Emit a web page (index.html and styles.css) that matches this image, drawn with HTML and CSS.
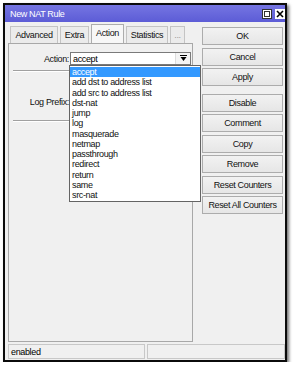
FILE: index.html
```html
<!DOCTYPE html>
<html>
<head>
    <title>New NAT Rule</title>
    <meta http-equiv="Content-Type" content="text/html; charset=utf-8">
    <link rel="stylesheet" href="styles.css">
</head>
<body>
    <div class="window">
        <div class="titlebar">
            <span class="title">New NAT Rule</span>
            <div class="title-buttons">
                <span class="tbtn tbtn-max"><span class="max-inner"></span></span>
                <span class="tbtn tbtn-close">
                    <svg width="8" height="8" viewBox="0 0 8 8"><path d="M1 1 L7 7 M7 1 L1 7" stroke="#000" stroke-width="1.6"/></svg>
                </span>
            </div>
        </div>

        <div class="body">
            <div class="left-col">
                <div class="tabs">
                    <div class="tab tab-advanced">Advanced</div>
                    <div class="tab tab-extra">Extra</div>
                    <div class="tab tab-action active">Action</div>
                    <div class="tab tab-stats">Statistics</div>
                    <div class="tab tab-more">...</div>
                </div>
                <div class="panel">
                    <div class="field-row action-row">
                        <div class="field-label">Action:</div>
                        <div class="select">
                            <span class="select-value">accept</span>
                            <span class="select-arrow">
                                <svg width="7" height="7" viewBox="0 0 7 7"><path d="M0 0.5 H7" stroke="#000" stroke-width="1"/><path d="M0.5 2 H6.5 L3.5 6 Z" fill="#000"/></svg>
                            </span>
                            <!-- open dropdown list -->
                            <ul class="dropdown">
                                <li class="selected">accept</li>
                                <li>add dst to address list</li>
                                <li>add src to address list</li>
                                <li>dst-nat</li>
                                <li>jump</li>
                                <li>log</li>
                                <li>masquerade</li>
                                <li>netmap</li>
                                <li>passthrough</li>
                                <li>redirect</li>
                                <li>return</li>
                                <li>same</li>
                                <li>src-nat</li>
                            </ul>
                        </div>
                    </div>
                    <div class="separator sep-first"></div>
                    <div class="field-row log-row">
                        <div class="field-label">Log Prefix:</div>
                        <div class="text-input"></div>
                    </div>
                    <div class="separator sep-second"></div>
                </div>
            </div>

            <div class="buttons">
                <div class="btn">OK</div>
                <div class="btn">Cancel</div>
                <div class="btn">Apply</div>
                <div class="btn btn-group-start">Disable</div>
                <div class="btn">Comment</div>
                <div class="btn">Copy</div>
                <div class="btn">Remove</div>
                <div class="btn">Reset Counters</div>
                <div class="btn">Reset All Counters</div>
            </div>
        </div>

        <div class="statusbar">
            <div class="status-field status-left">enabled</div>
            <div class="status-field status-right"></div>
        </div>
    </div>
</body>
</html>
```

FILE: styles.css
```css
body, html {
    margin: 0;
    background: #fff;
    font-family: "Liberation Sans", Arial, sans-serif;
    font-size: 9px;
    letter-spacing: -0.35px;
    color: #000;
}

.window {
    box-sizing: border-box;
    margin: 3px 0 0 3px;
    width: 284px;
    height: 359px;
    border: 2px solid #0b0b0b;
    background: #f0f0f0;
    box-shadow: 2px 2px 3px rgba(0, 0, 0, 0.55);
    display: flex;
    flex-direction: column;
}

.titlebar {
    height: 17px;
    background: linear-gradient(180deg, #7575e2, #5c5cd6);
    display: flex;
    align-items: center;
    justify-content: space-between;
    padding: 0 0 0 5px;
}

.title {
    color: #fff;
    font-size: 9px;
}

.title-buttons {
    display: flex;
    gap: 3px;
    margin-right: 0;
}

.tbtn {
    box-sizing: border-box;
    width: 10px;
    height: 10px;
    background: #fff;
    display: flex;
    align-items: center;
    justify-content: center;
}

.tbtn-max {
    border: 1px solid #333;
}

.max-inner {
    box-sizing: border-box;
    width: 6px;
    height: 6px;
    border: 1px solid #333;
}

.body {
    flex: 1;
    display: flex;
    padding: 0 2px 0 3px;
    gap: 9px;
}

.left-col {
    width: 185px;
    display: flex;
    flex-direction: column;
}

.tabs {
    display: flex;
    align-items: flex-end;
    gap: 2px;
    padding-left: 2px;
    height: 21px;
}

.tab {
    box-sizing: border-box;
    height: 17px;
    border: 1px solid #c4c4c4;
    border-bottom: none;
    background: #ebebeb;
    color: #111;
    display: flex;
    align-items: center;
    justify-content: center;
}

.tab-advanced { width: 48px; }
.tab-extra { width: 29px; }
.tab-action { width: 33px; }
.tab-stats { width: 42px; }
.tab-more { width: 15px; color: #999; }

.tab.active {
    height: 19px;
    background: #f7f7f7;
    border-color: #adadad;
    padding-bottom: 3px;
}

.panel {
    flex: 1;
    border: 1px solid #a8a8a8;
    background: #f0f0f0;
    padding-top: 8px;
}

.field-row {
    display: flex;
    align-items: center;
    height: 13px;
}

.field-label {
    width: 60px;
    text-align: right;
    padding-right: 1px;
    color: #111;
}

.select {
    position: relative;
    box-sizing: border-box;
    width: 121px;
    height: 13px;
    border: 1px solid #7a7a7a;
    background: #fff;
    display: flex;
    align-items: center;
    justify-content: space-between;
    padding-left: 2px;
}

.select-arrow {
    box-sizing: border-box;
    width: 15px;
    height: 11px;
    border-left: 1px solid #dcdcdc;
    background: #f4f4f4;
    display: flex;
    align-items: center;
    justify-content: center;
}

.dropdown {
    position: absolute;
    top: 12px;
    left: -2px;
    box-sizing: border-box;
    width: 132px;
    height: 137px;
    margin: 0;
    padding: 1px 0 0;
    list-style: none;
    background: #fff;
    border: 1px solid #646464;
    z-index: 2;
}

.dropdown li {
    height: 10.25px;
    line-height: 10.25px;
    padding-left: 2px;
    color: #111;
}

.dropdown li.selected {
    background: #3399ff;
    color: #fff;
}

.separator {
    margin: 0 4px 0 4px;
    border-top: 1px solid #a0a0a0;
    border-bottom: 1px solid #fff;
}

.sep-first {
    margin-top: 5px;
}

.log-row {
    margin-top: 23px;
}

.text-input {
    box-sizing: border-box;
    width: 121px;
    height: 13px;
    border: 1px solid #7a7a7a;
    background: #fff;
}

.sep-second {
    margin-top: 12px;
}

.buttons {
    width: 81px;
    display: flex;
    flex-direction: column;
    gap: 2.5px;
    padding-top: 5px;
}

.btn {
    box-sizing: border-box;
    height: 18px;
    border: 1px solid #acacac;
    background: linear-gradient(180deg, #f2f2f2, #e6e6e6);
    display: flex;
    align-items: center;
    justify-content: center;
    color: #111;
}

.btn-group-start {
    margin-top: 5px;
}

.statusbar {
    display: flex;
    gap: 2px;
    padding: 2px 0 1px 3px;
}

.status-field {
    box-sizing: border-box;
    height: 15px;
    border: 1px solid #c8c8c8;
    display: flex;
    align-items: center;
    padding-left: 2px;
}

.status-left { width: 137px; }
.status-right { flex: 1; }
```
